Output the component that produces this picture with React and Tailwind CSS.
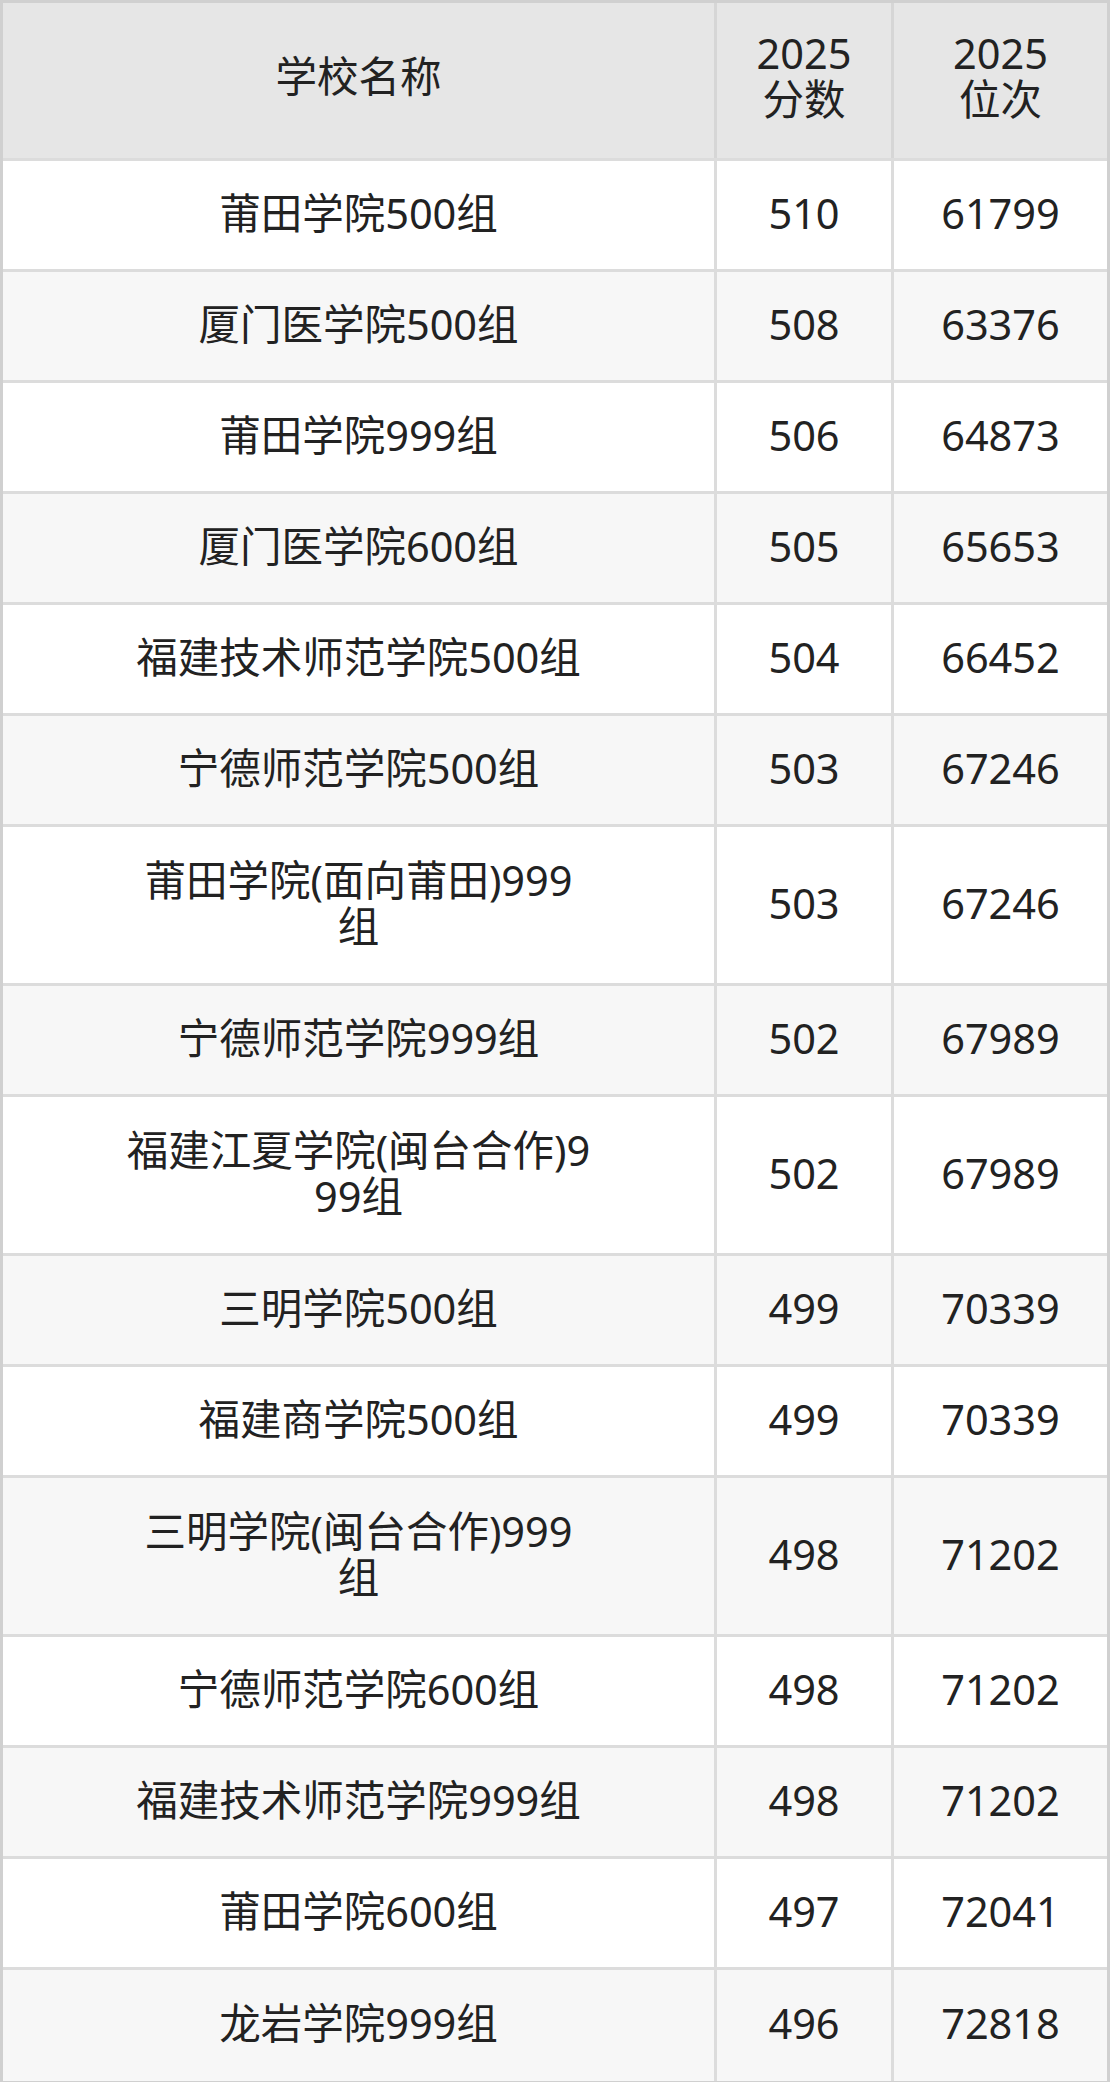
import React from "react";

const rows = [
  ["莆田学院500组", "510", "61799"],
  ["厦门医学院500组", "508", "63376"],
  ["莆田学院999组", "506", "64873"],
  ["厦门医学院600组", "505", "65653"],
  ["福建技术师范学院500组", "504", "66452"],
  ["宁德师范学院500组", "503", "67246"],
  ["莆田学院(面向莆田)999组", "503", "67246", true],
  ["宁德师范学院999组", "502", "67989"],
  ["福建江夏学院(闽台合作)999组", "502", "67989", true],
  ["三明学院500组", "499", "70339"],
  ["福建商学院500组", "499", "70339"],
  ["三明学院(闽台合作)999组", "498", "71202", true],
  ["宁德师范学院600组", "498", "71202"],
  ["福建技术师范学院999组", "498", "71202"],
  ["莆田学院600组", "497", "72041"],
  ["龙岩学院999组", "496", "72818"],
];

export default function App() {
  return (
    <div className="w-[1110px] bg-white font-['Noto_Sans','Noto_Sans_CJK_SC',sans-serif] text-[41.5px] leading-[46px] text-[#222222]">
      <div className="border-[3px] border-[#d0d0d0]">
        <div className="flex h-[158px] bg-[#e6e6e6] border-b-[3px] border-[#dcdcdc]">
          <div className="w-[714px] flex items-center justify-center pb-[9px] border-r-[3px] border-[#d6d6d6]">学校名称</div>
          <div className="w-[177px] flex items-center justify-center pb-[9px] text-center border-r-[3px] border-[#d6d6d6]">2025<br />分数</div>
          <div className="flex-1 flex items-center justify-center pb-[9px] text-center">2025<br />位次</div>
        </div>
        {rows.map((r, i) => (
          <div
            key={i}
            className={`flex ${r[3] ? "h-[159px]" : "h-[111px]"} ${i % 2 === 1 ? "bg-[#f7f7f7]" : "bg-white"} ${i < rows.length - 1 ? "border-b-[3px]" : ""} border-[#dcdcdc]`}
          >
            <div className="w-[714px] flex items-center justify-center pb-[5px] border-r-[3px] border-[#dcdcdc]">
              <div className="w-[464px] text-center break-all">{r[0]}</div>
            </div>
            <div className="w-[177px] flex items-center justify-center pb-[5px] border-r-[3px] border-[#dcdcdc]">{r[1]}</div>
            <div className="flex-1 flex items-center justify-center pb-[5px]">{r[2]}</div>
          </div>
        ))}
      </div>
    </div>
  );
}
